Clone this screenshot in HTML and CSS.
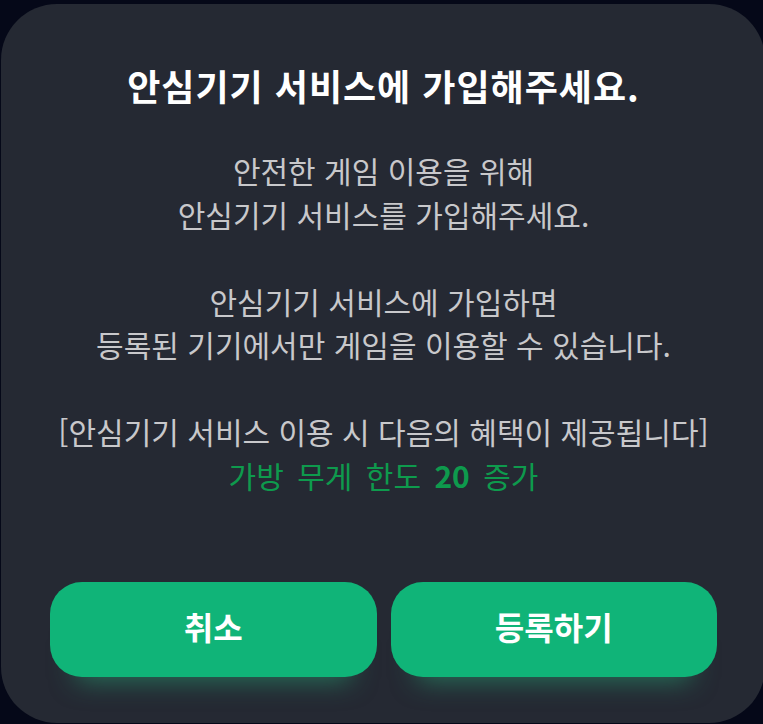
FILE: index.html
```html
<!DOCTYPE html>
<html lang="ko">
<head>
<meta charset="utf-8">
<title>안심기기 서비스</title>
<link rel="stylesheet" href="styles.css">
</head>
<body>
<div class="modal">
  <h1 class="title">안심기기 서비스에 가입해주세요.</h1>
  <div class="message">
    <p class="line">안전한 게임 이용을 위해</p>
    <p class="line">안심기기 서비스를 가입해주세요.</p>
    <p class="line blank">&nbsp;</p>
    <p class="line">안심기기 서비스에 가입하면</p>
    <p class="line">등록된 기기에서만 게임을 이용할 수 있습니다.</p>
    <p class="line blank">&nbsp;</p>
    <p class="line">[안심기기 서비스 이용 시 다음의 혜택이 제공됩니다]</p>
    <p class="line benefit">가방 무게 한도 <strong class="num">20</strong> 증가</p>
  </div>
  <div class="actions">
    <button class="btn" type="button">취소</button>
    <button class="btn" type="button">등록하기</button>
  </div>
</div>
</body>
</html>
```
FILE: styles.css
```css
html, body {
  margin: 0;
  padding: 0;
}
body {
  width: 763px;
  height: 724px;
  overflow: hidden;
  background: #050818;
  font-family: "Noto Sans CJK KR", "Noto Sans", sans-serif;
}
.modal {
  box-sizing: border-box;
  width: 764px;
  height: 719px;
  margin: 4px 0 0 1px;
  background: #252933;
  border-radius: 56px;
  padding: 59px 48px 46px 49px;
  display: flex;
  flex-direction: column;
  align-items: stretch;
}
.title {
  margin: 0;
  font-size: 36px;
  line-height: 44px;
  font-weight: 700;
  letter-spacing: 1px;
  color: #ffffff;
  text-align: center;
}
.message {
  margin-top: 42px;
  text-align: center;
  color: #c8c8cb;
  font-size: 30px;
  font-weight: 400;
}
.line {
  margin: 0;
  line-height: 43.5px;
  white-space: nowrap;
}
.benefit {
  color: #0e9a4d;
  word-spacing: 5px;
}
.num {
  font-weight: 700;
}
.actions {
  margin-top: auto;
  display: flex;
  gap: 14px;
}
.btn {
  flex: 1;
  height: 95px;
  border: 0;
  border-radius: 32px;
  background: #10b478;
  color: #ffffff;
  font-family: inherit;
  font-size: 32px;
  font-weight: 700;
  box-shadow: 0 30px 26px -26px rgba(40, 160, 115, 0.6);
  padding: 0 0 7px;
}
```
